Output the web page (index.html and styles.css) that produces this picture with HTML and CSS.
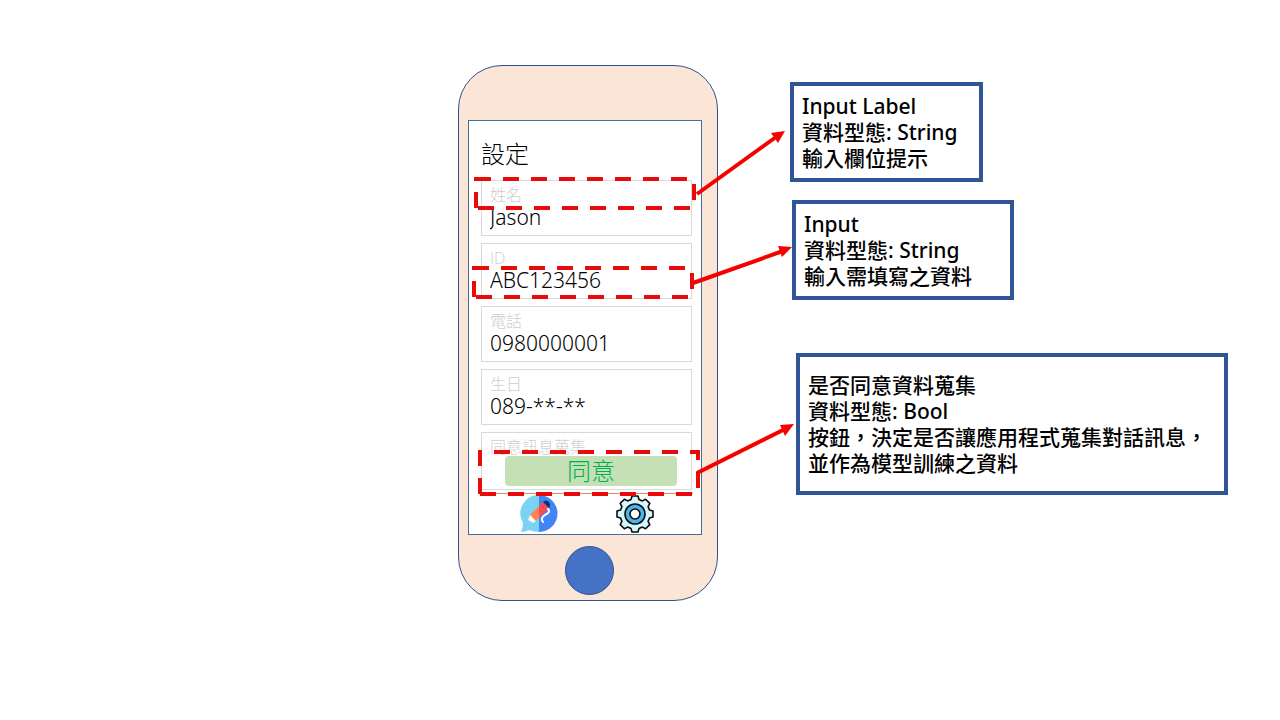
FILE: index.html
```html
<!DOCTYPE html>
<html lang="zh-Hant">
<head>
<meta charset="utf-8">
<title>設定</title>
<link rel="stylesheet" href="styles.css">
</head>
<body>
<main class="canvas">
  <section class="phone">
    <form class="screen">
      <h1 class="title">設定</h1>
      <div class="fields">
        <div class="field">
          <label class="label" for="name">姓名</label>
          <input class="value" id="name" type="text" value="Jason">
        </div>
        <div class="field">
          <label class="label" for="uid">ID</label>
          <input class="value" id="uid" type="text" value="ABC123456">
        </div>
        <div class="field">
          <label class="label" for="tel">電話</label>
          <input class="value" id="tel" type="text" value="0980000001">
        </div>
        <div class="field">
          <label class="label" for="birth">生日</label>
          <input class="value" id="birth" type="text" value="089-**-**">
        </div>
        <div class="field">
          <label class="label" for="agree">同意訊息蒐集</label>
          <button class="agree" id="agree" type="button">同意</button>
        </div>
      </div>
      <nav class="tabs">
        <button class="tab" type="button" aria-label="對話">
          <svg viewBox="0 0 38 38">
            <path fill="#7bd3f2" d="M19 0A18.500 18.500 0 0 0 3 28Q3 33 1 37Q6 37 9 35Q14 37 19 37Z"/>
            <path fill="#4285f4" d="M19 0A18.500 18.500 0 0 1 19 37Z"/>
            <path fill="#ff8050" d="M10 20L19 11V23L16 26Z"/>
            <path fill="#f84c55" d="M19 11L23 7L29 13L19 23Z"/>
            <path fill="#083578" d="M23 7Q26 4 29 7Q31 10 29 13Z"/>
            <path fill="#fff3e8" d="M10 20L16 26L13 28L8 25Z"/>
            <path fill="none" stroke="#fff" stroke-width="2" stroke-linecap="round" d="M28 14Q31 17 25 20Q20 23 23 27"/>
          </svg>
        </button>
        <button class="tab" type="button" aria-label="設定">
          <svg viewBox="0 0 38 38">
            <path fill="#d5f7fc" stroke="#0a0d10" stroke-width="1.600" stroke-linejoin="round" d="M15 4.500L16 1H22L23 4.500L26.400 5.900L29.600 4.200L33.800 8.400L32.100 11.600L33.500 15L37 16V22L33.500 23L32.100 26.400L33.800 29.600L29.600 33.800L26.400 32.100L23 33.500L22 37H16L15 33.500L11.600 32.100L8.400 33.800L4.200 29.600L5.900 26.400L4.500 23L1 22V16L4.500 15L5.900 11.600L4.200 8.400L8.400 4.200L11.600 5.900Z"/>
            <circle cx="19" cy="19" r="10" fill="#4bb5ea" stroke="#0a0d10" stroke-width="1.600"/>
            <circle cx="19" cy="19" r="5" fill="#fff" stroke="#0a0d10" stroke-width="1.600"/>
          </svg>
        </button>
      </nav>
    </form>
    <button class="home" type="button" aria-label="主畫面"></button>
  </section>

  <aside class="note note-label">Input Label<br>資料型態: String<br>輸入欄位提示</aside>
  <aside class="note note-input">Input<br>資料型態: String<br>輸入需填寫之資料</aside>
  <aside class="note note-agree">是否同意資料蒐集<br>資料型態: Bool<br>按鈕，決定是否讓應用程式蒐集對話訊息，<br>並作為模型訓練之資料</aside>

  <svg class="marks" width="1280" height="720" viewBox="0 0 1280 720" aria-hidden="true">
    <defs>
      <g id="frame">
        <path class="dash" stroke-dashoffset="1" d="M476 179H694V208H478"/>
        <path class="dash" d="M476 208V192M474 179H480"/>
      </g>
    </defs>
    <use href="#frame"/>
    <use href="#frame" x="-2" y="89"/>
    <path class="dash" d="M494 452H698V494H480"/>
    <path class="dash" d="M480 494V450"/>
    <path class="arrow" d="M697 194L776 137"/>
    <path class="arrow" d="M693 283L783 251"/>
    <path class="arrow" d="M697 473L785 429"/>
    <path class="head" d="M785 131L771 133L778 143Z"/>
    <path class="head" d="M792 247L778 246L782 257Z"/>
    <path class="head" d="M794 424L780 425L785 436Z"/>
  </svg>
</main>
</body>
</html>
```
FILE: styles.css
```css
* {
  box-sizing: border-box;
}

body {
  margin: 0;
  background: #fff;
  color: #000;
  font-family: "Open Sans", "Noto Sans CJK TC", sans-serif;
}

.canvas {
  position: relative;
  min-height: 720px;
  padding: 65px 0 0 458px;
}

.phone {
  display: flex;
  flex-direction: column;
  align-items: center;
  gap: 11px;
  width: 260px;
  padding: 54px 7px 5px 9px;
  border: 1px solid #2f528f;
  border-radius: 44px;
  background: #fbe5d6;
}

.screen {
  align-self: flex-start;
  width: 234px;
  padding-top: 17px;
  border: 1px solid #41719c;
  background: #fff;
}

.title {
  margin: 0 0 10px;
  padding-left: 12px;
  font-size: 24px;
  font-weight: 300;
  line-height: 32px;
}

.fields {
  display: flex;
  flex-direction: column;
  gap: 7px;
  padding: 0 9px 0 12px;
}

.field {
  display: flex;
  flex-direction: column;
  padding: 5px 8px 3px;
  border: 1px solid #d9d9d9;
}

.field:not(:last-child) {
  padding-bottom: 5px;
}

.label {
  color: #d0cece;
  font-size: 16px;
  font-weight: 300;
  line-height: 18px;
}

.value {
  width: 100%;
  height: 26px;
  padding: 0;
  border: 0;
  outline: 0;
  background: none;
  color: #000;
  font-family: "Noto Sans", "Noto Sans CJK TC", sans-serif;
  font-size: 21px;
  font-weight: 300;
}

.agree {
  height: 30px;
  margin: 0 6px 0 15px;
  padding: 0;
  border: 0;
  border-radius: 4px;
  background: #c5e0b4;
  color: #00b050;
  font-family: inherit;
  font-size: 24px;
  font-weight: 300;
  line-height: 30px;
}

.tabs {
  display: flex;
  justify-content: center;
  gap: 58px;
  margin: 3px 8px 0 12px;
  padding: 1px 0;
  border-top: 1px solid #d98a5c;
}

.tab {
  width: 38px;
  height: 38px;
  padding: 0;
  border: 0;
  background: none;
}

.tab svg {
  display: block;
}

.home {
  width: 49px;
  height: 49px;
  border: 1px solid #2f528f;
  border-radius: 50%;
  background: #4472c4;
}

.note {
  position: absolute;
  padding: 7px 8px;
  border: 4px solid #2f5597;
  background: #fff;
  font-family: "Noto Sans", "Noto Sans CJK TC", sans-serif;
  font-size: 21px;
  font-weight: 500;
  line-height: 26px;
  white-space: nowrap;
}

.note-label {
  left: 790px;
  top: 82px;
  width: 193px;
}

.note-input {
  left: 792px;
  top: 200px;
  width: 222px;
}

.note-agree {
  left: 796px;
  top: 353px;
  width: 432px;
  padding-top: 15px;
  padding-bottom: 15px;
}

.marks {
  position: absolute;
  left: 0;
  top: 0;
  pointer-events: none;
}

.dash {
  fill: none;
  stroke: #e90a0a;
  stroke-width: 4;
  stroke-dasharray: 16 12;
}

.arrow {
  stroke: #f60000;
  stroke-width: 4;
}

.head {
  fill: #f60000;
}
```
